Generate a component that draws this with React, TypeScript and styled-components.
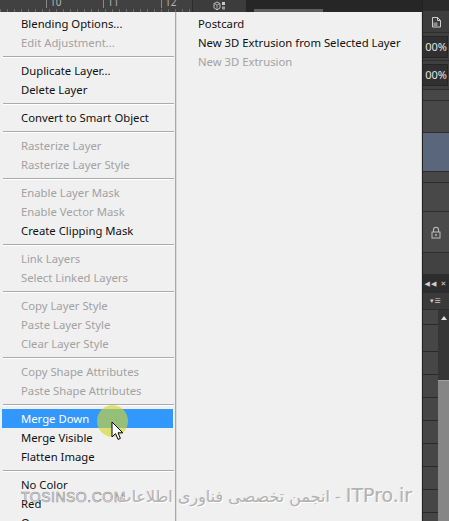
import styled, { createGlobalStyle } from "styled-components";

const GlobalStyle = createGlobalStyle`
  html, body {
    margin: 0;
    padding: 0;
    background: #2b2b2b;
    overflow: hidden;
  }
`;

const Screen = styled.div`
  position: relative;
  width: 449px;
  height: 521px;
  display: flex;
  overflow: hidden;
  font-family: "Noto Sans", "Open Sans", sans-serif;
`;

const MainColumn = styled.div`
  width: 422px;
  display: flex;
  flex-direction: column;
`;

const TopStrip = styled.div`
  height: 12px;
  display: flex;
  background: #2a2a2a;
  overflow: hidden;
`;

const Ruler = styled.div`
  width: 192px;
  display: flex;
  align-items: flex-start;
  background-color: #414141;
  background-image: repeating-linear-gradient(
    to right,
    #6a6a6a 0px,
    #6a6a6a 1px,
    transparent 1px,
    transparent 7px
  );
  background-size: 100% 3px;
  background-position: 0 9px;
  background-repeat: no-repeat;
`;

const RulerNumber = styled.span<{ $left: number }>`
  margin-left: ${(p) => p.$left}px;
  margin-top: -4px;
  font-size: 10px;
  line-height: 12px;
  color: #b5b5b5;
  padding-left: 3px;
  border-left: 1px solid #8a8a8a;
`;

const ToolSlot = styled.div`
  width: 53px;
  display: flex;
  align-items: center;
  justify-content: center;
  background: #3c3c3c;
  border-left: 1px solid #2c2c2c;
  border-right: 1px solid #242424;
`;

const DarkTabs = styled.div`
  flex: 1;
  display: flex;
  align-items: flex-end;
  padding-left: 7px;
  background: #262626;
`;

const TabEdge = styled.div`
  width: 69px;
  height: 3px;
  background: #5e5e5e;
`;

const MenuRow = styled.div`
  flex: 1;
  display: flex;
  min-height: 0;
`;

const Menu = styled.div<{ $width: number }>`
  width: ${(p) => p.$width}px;
  box-sizing: border-box;
  background: #f0f0f0;
  padding-top: 2px;
  overflow: hidden;
`;

const MainMenu = styled(Menu)`
  border-right: 1px solid #a7a7a7;
`;

const SubMenu = styled(Menu)`
  border-left: 1px solid #dcdcdc;
  box-shadow: inset -1px 0 0 #d8d8d8;
`;

const MenuItem = styled.div<{ $disabled?: boolean; $active?: boolean }>`
  height: 19px;
  line-height: 19px;
  margin: 0 2px;
  padding-left: 19px;
  font-size: 11.3px;
  white-space: nowrap;
  color: ${(p) => (p.$active ? "#ffffff" : p.$disabled ? "#a2a2a2" : "#111111")};
  background: ${(p) => (p.$active ? "#3398fd" : "transparent")};
`;

const Separator = styled.div`
  height: 1px;
  margin: 4px 1px 3px 3px;
  background: #ababab;
  border-bottom: 1px solid #ffffff;
`;

const RightPanel = styled.div`
  width: 27px;
  display: flex;
  flex-direction: column;
  background: #474747;
  border-left: 1px solid #222222;
  box-sizing: border-box;
`;

const PanelBlock = styled.div<{ $h: number; $bg: string }>`
  height: ${(p) => p.$h}px;
  flex-shrink: 0;
  background: ${(p) => p.$bg};
  border-bottom: 1px solid #2e2e2e;
  display: flex;
  align-items: center;
  justify-content: center;
  overflow: hidden;
  color: #d6d6d6;
  font-size: 11px;
`;

const PercentField = styled.div`
  width: 24px;
  height: 20px;
  line-height: 20px;
  background: #303030;
  border: 1px solid #262626;
  border-left: none;
  color: #e2e2e2;
  font-size: 11px;
  text-align: right;
  overflow: hidden;
  margin-right: 1px;
  direction: rtl;
`;

const Glyphs = styled.span`
  font-family: "DejaVu Sans", sans-serif;
  font-size: 7px;
  letter-spacing: 1px;
  white-space: nowrap;
  color: #d0d0d0;
`;

const ScrollArea = styled.div`
  flex: 1;
  display: flex;
`;

const Rows = styled.div`
  flex: 1;
  background-color: #464646;
  background-image: repeating-linear-gradient(
    to bottom,
    transparent 0px,
    transparent 22px,
    #2a2a2a 22px,
    #2a2a2a 23px
  );
  background-position: 0 19px;
`;

const ScrollTrack = styled.div`
  width: 11px;
  display: flex;
  flex-direction: column;
  background: #353535;
`;

const ScrollUp = styled.div`
  height: 70px;
  display: flex;
  justify-content: center;
  padding-top: 6px;
  box-sizing: border-box;
`;

const ScrollThumb = styled.div`
  flex: 1;
  background: #868686;
  border-top: 1px solid #a0a0a0;
`;

const Highlight = styled.div`
  position: absolute;
  left: 97px;
  top: 405px;
  width: 31px;
  height: 32px;
  border-radius: 50%;
  background: rgba(212, 214, 38, 0.62);
  pointer-events: none;
`;

const Cursor = styled.svg`
  position: absolute;
  left: 111px;
  top: 421px;
`;

const Watermark = styled.div`
  position: absolute;
  right: 37px;
  top: 484px;
  direction: rtl;
  white-space: nowrap;
  font-family: "DejaVu Sans", "Liberation Sans", sans-serif;
  color: #b2b2b2;
  text-shadow: 1px 1px 0 #ffffff, -1px 0 0 #e6e6e6;
  pointer-events: none;
`;

const MarkPart = styled.span<{ $size: number }>`
  font-size: ${(p) => p.$size}px;
`;

const SiteMark = styled.div`
  position: absolute;
  left: 21px;
  top: 489px;
  font-family: "Liberation Sans", sans-serif;
  font-size: 14px;
  letter-spacing: 0.5px;
  color: rgba(240, 240, 240, 0.4);
  -webkit-text-stroke: 0.6px rgba(110, 110, 110, 0.75);
  pointer-events: none;
`;

type Item = { label: string; disabled?: boolean; active?: boolean };

const layerMenu: Item[][] = [
  [{ label: "Blending Options..." }, { label: "Edit Adjustment...", disabled: true }],
  [{ label: "Duplicate Layer..." }, { label: "Delete Layer" }],
  [{ label: "Convert to Smart Object" }],
  [
    { label: "Rasterize Layer", disabled: true },
    { label: "Rasterize Layer Style", disabled: true },
  ],
  [
    { label: "Enable Layer Mask", disabled: true },
    { label: "Enable Vector Mask", disabled: true },
    { label: "Create Clipping Mask" },
  ],
  [
    { label: "Link Layers", disabled: true },
    { label: "Select Linked Layers", disabled: true },
  ],
  [
    { label: "Copy Layer Style", disabled: true },
    { label: "Paste Layer Style", disabled: true },
    { label: "Clear Layer Style", disabled: true },
  ],
  [
    { label: "Copy Shape Attributes", disabled: true },
    { label: "Paste Shape Attributes", disabled: true },
  ],
  [{ label: "Merge Down", active: true }, { label: "Merge Visible" }, { label: "Flatten Image" }],
  [{ label: "No Color" }, { label: "Red" }, { label: "Orange" }],
];

const extrusionMenu: Item[] = [
  { label: "Postcard" },
  { label: "New 3D Extrusion from Selected Layer" },
  { label: "New 3D Extrusion", disabled: true },
];

function CubeIcon() {
  return (
    <svg width="16" height="10" viewBox="0 0 16 10">
      <path d="M2 2.5 L5 1 L8 2.5 L8 7 L5 8.8 L2 7 Z" fill="none" stroke="#bdbdbd" strokeWidth="1" />
      <path d="M2 2.5 L5 4 L8 2.5 M5 4 L5 8.8" fill="none" stroke="#bdbdbd" strokeWidth="0.8" />
      <rect x="10" y="1" width="3" height="3" fill="#c8c8c8" />
      <rect x="10" y="5.5" width="3" height="3" fill="#9a9a9a" />
    </svg>
  );
}

function DocIcon() {
  return (
    <svg width="11" height="12" viewBox="0 0 11 12">
      <path d="M1.5 1.5 H6.5 L9.5 4.5 V11 H1.5 Z" fill="none" stroke="#cfcfcf" strokeWidth="1" />
      <path d="M6.5 1.5 V4.5 H9.5" fill="none" stroke="#cfcfcf" strokeWidth="1" />
      <rect x="2.5" y="6.5" width="4" height="3.5" fill="#8e8e8e" />
    </svg>
  );
}

function LockIcon() {
  return (
    <svg width="10" height="13" viewBox="0 0 10 13">
      <path d="M2.5 6 V3.8 A2.5 2.5 0 0 1 7.5 3.8 V6" fill="none" stroke="#bdbdbd" strokeWidth="1.1" />
      <rect x="1" y="6" width="8" height="6" fill="none" stroke="#bdbdbd" strokeWidth="1" />
      <rect x="4.3" y="8" width="1.4" height="2" fill="#bdbdbd" />
    </svg>
  );
}

function App() {
  return (
    <>
      <GlobalStyle />
      <Screen>
        <MainColumn>
          <TopStrip>
            <Ruler>
              <RulerNumber $left={46}>10</RulerNumber>
              <RulerNumber $left={42}>11</RulerNumber>
              <RulerNumber $left={42}>12</RulerNumber>
            </Ruler>
            <ToolSlot>
              <CubeIcon />
            </ToolSlot>
            <DarkTabs>
              <TabEdge />
            </DarkTabs>
          </TopStrip>
          <MenuRow>
            <MainMenu $width={176}>
              {layerMenu.map((group, gi) => (
                <div key={gi}>
                  {gi > 0 && <Separator />}
                  {group.map((item) => (
                    <MenuItem key={item.label} $disabled={item.disabled} $active={item.active}>
                      {item.label}
                    </MenuItem>
                  ))}
                </div>
              ))}
            </MainMenu>
            <SubMenu $width={246}>
              {extrusionMenu.map((item) => (
                <MenuItem key={item.label} $disabled={item.disabled}>
                  {item.label}
                </MenuItem>
              ))}
            </SubMenu>
          </MenuRow>
        </MainColumn>
        <RightPanel>
          <PanelBlock $h={10} $bg="#2a2a2a" />
          <PanelBlock $h={21} $bg="#3d3d3d">
            <DocIcon />
          </PanelBlock>
          <PanelBlock $h={27} $bg="#404040">
            <PercentField>00%</PercentField>
          </PanelBlock>
          <PanelBlock $h={28} $bg="#404040">
            <PercentField>00%</PercentField>
          </PanelBlock>
          <PanelBlock $h={10} $bg="#474747" />
          <PanelBlock $h={31} $bg="#484848" />
          <PanelBlock $h={38} $bg="#5a667c" />
          <PanelBlock $h={10} $bg="#474747" />
          <PanelBlock $h={28} $bg="#484848" />
          <PanelBlock $h={40} $bg="#4a4a4a">
            <LockIcon />
          </PanelBlock>
          <PanelBlock $h={21} $bg="#424242" />
          <PanelBlock $h={17} $bg="#2d2d2d">
            <Glyphs>◀◀ ✕</Glyphs>
          </PanelBlock>
          <PanelBlock $h={16} $bg="#3a3a3a">
            <Glyphs>▾☰</Glyphs>
          </PanelBlock>
          <ScrollArea>
            <Rows />
            <ScrollTrack>
              <ScrollUp>
                <svg width="6" height="4" viewBox="0 0 6 4">
                  <path d="M0 4 L3 0 L6 4 Z" fill="#e0e0e0" />
                </svg>
              </ScrollUp>
              <ScrollThumb />
            </ScrollTrack>
          </ScrollArea>
        </RightPanel>
        <Highlight />
        <Cursor width="13" height="20" viewBox="0 0 13 20">
          <path
            d="M1 1 L1 16 L4.5 12.6 L7 18.4 L9.4 17.4 L7 11.8 L11.8 11.8 Z"
            fill="#ffffff"
            stroke="#000000"
            strokeWidth="1"
            strokeLinejoin="round"
          />
        </Cursor>
        <SiteMark>TOSINSO.COM</SiteMark>
        <Watermark>
          <MarkPart $size={19}>ITPro.ir</MarkPart>
          <MarkPart $size={16}> - انجمن تخصصی فناوری اطلاعات</MarkPart>
        </Watermark>
      </Screen>
    </>
  );
}

export default App;
